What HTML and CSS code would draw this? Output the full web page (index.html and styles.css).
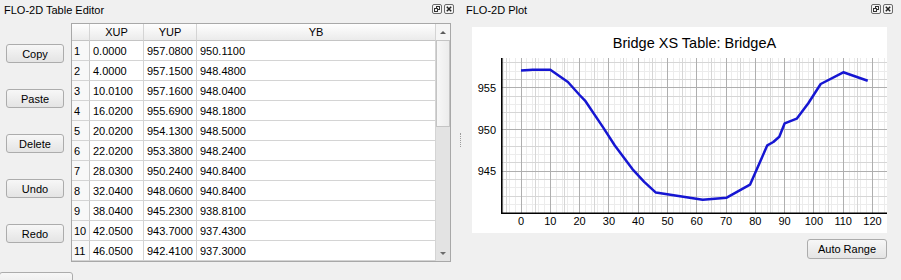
FILE: index.html
```html
<!DOCTYPE html>
<html lang="en">
<head>
    <meta charset="UTF-8">
    <title>FLO-2D Table Editor</title>
    <link rel="stylesheet" href="styles.css">
</head>
<body>
<div class="window">
    <!-- Table editor dock -->
    <section class="dock dock-table">
        <div class="dock-title">
            <span>FLO-2D Table Editor</span>
            <span class="title-btns">
                <svg width="10" height="10" viewBox="0 0 10 10"><rect x=".5" y=".5" width="9" height="9" rx="1.5" fill="#f4f4f4" stroke="#6a6a6a"/><rect x="4.5" y="2.5" width="3" height="3" fill="none" stroke="#333"/><rect x="2.5" y="4.5" width="3" height="3" fill="#f4f4f4" stroke="#333"/></svg>
                <svg width="10" height="10" viewBox="0 0 10 10"><rect x=".5" y=".5" width="9" height="9" rx="1.5" fill="#f4f4f4" stroke="#6a6a6a"/><path d="M2.8 2.8l4.4 4.4M7.2 2.8l-4.4 4.4" stroke="#222" stroke-width="1.5"/></svg>
            </span>
        </div>
        <div class="dock-body">
            <div class="btn-col">
                <button class="btn">Copy</button>
                <button class="btn">Paste</button>
                <button class="btn">Delete</button>
                <button class="btn">Undo</button>
                <button class="btn">Redo</button>
            </div>
            <div class="table-view">
                <div class="cells">
                    <div class="hd"></div><div class="hd">XUP</div><div class="hd">YUP</div><div class="hd">YB</div>
                    <div class="rh">1</div><div>0.0000</div><div>957.0800</div><div>950.1100</div>
                    <div class="rh">2</div><div>4.0000</div><div>957.1500</div><div>948.4800</div>
                    <div class="rh">3</div><div>10.0100</div><div>957.1600</div><div>948.0400</div>
                    <div class="rh">4</div><div>16.0200</div><div>955.6900</div><div>948.1800</div>
                    <div class="rh">5</div><div>20.0200</div><div>954.1300</div><div>948.5000</div>
                    <div class="rh">6</div><div>22.0200</div><div>953.3800</div><div>948.2400</div>
                    <div class="rh">7</div><div>28.0300</div><div>950.2400</div><div>940.8400</div>
                    <div class="rh">8</div><div>32.0400</div><div>948.0600</div><div>940.8400</div>
                    <div class="rh">9</div><div>38.0400</div><div>945.2300</div><div>938.8100</div>
                    <div class="rh">10</div><div>42.0500</div><div>943.7000</div><div>937.4300</div>
                    <div class="rh">11</div><div>46.0500</div><div>942.4100</div><div>937.3000</div>
                </div>
                <div class="vscroll">
                    <div class="sb-btn sb-up"><span class="tri-up"></span></div>
                    <div class="sb-thumb"></div>
                    <div class="sb-track"></div>
                    <div class="sb-btn sb-down"><span class="tri-down"></span></div>
                </div>
            </div>
        </div>
        <button class="btn btn-cut"></button>
    </section>

    <div class="splitter"><div class="grip"></div></div>

    <!-- Plot dock -->
    <section class="dock dock-plot">
        <div class="dock-title">
            <span>FLO-2D Plot</span>
            <span class="title-btns">
                <svg width="10" height="10" viewBox="0 0 10 10"><rect x=".5" y=".5" width="9" height="9" rx="1.5" fill="#f4f4f4" stroke="#6a6a6a"/><rect x="4.5" y="2.5" width="3" height="3" fill="none" stroke="#333"/><rect x="2.5" y="4.5" width="3" height="3" fill="#f4f4f4" stroke="#333"/></svg>
                <svg width="10" height="10" viewBox="0 0 10 10"><rect x=".5" y=".5" width="9" height="9" rx="1.5" fill="#f4f4f4" stroke="#6a6a6a"/><path d="M2.8 2.8l4.4 4.4M7.2 2.8l-4.4 4.4" stroke="#222" stroke-width="1.5"/></svg>
            </span>
        </div>
        <div class="plot-box">
            <svg class="plot" width="415" height="206" viewBox="0 0 415 206">
                <text class="ttl" x="222.5" y="21" text-anchor="middle">Bridge XS Table: BridgeA</text>
                <g shape-rendering="crispEdges">
                    <path class="g-faint" d="M31.4 31V186M37.3 31V186M43.1 31V186M54.9 31V186M60.7 31V186M66.6 31V186M72.4 31V186M84.2 31V186M90 31V186M95.9 31V186M101.7 31V186M113.4 31V186M119.3 31V186M125.2 31V186M131 31V186M142.7 31V186M148.6 31V186M154.4 31V186M160.3 31V186M172 31V186M177.9 31V186M183.7 31V186M189.6 31V186M201.3 31V186M207.2 31V186M213 31V186M218.9 31V186M230.6 31V186M236.5 31V186M242.3 31V186M248.2 31V186M259.9 31V186M265.8 31V186M271.6 31V186M277.5 31V186M289.2 31V186M295 31V186M300.9 31V186M306.8 31V186M318.5 31V186M324.3 31V186M330.2 31V186M336 31V186M347.8 31V186M353.6 31V186M359.5 31V186M365.3 31V186M377.1 31V186M382.9 31V186M388.8 31V186M394.6 31V186M406.3 31V186M412.2 31V186M30 177.3H415M30 160.7H415M30 127.3H415M30 110.7H415M30 94H415M30 77.4H415M30 44H415"/>
                    <path class="g-minor" d="M34.4 31V186M63.7 31V186M92.9 31V186M122.2 31V186M151.5 31V186M180.8 31V186M210.1 31V186M239.4 31V186M268.7 31V186M298 31V186M327.3 31V186M356.6 31V186M385.8 31V186M30 169H415M30 152.3H415M30 135.7H415M30 119H415M30 85.7H415M30 69H415M30 52.4H415M30 35.7H415"/>
                    <path class="g-major" d="M49 31V186M78.3 31V186M107.6 31V186M136.9 31V186M166.2 31V186M195.5 31V186M224.7 31V186M254 31V186M283.3 31V186M312.6 31V186M341.9 31V186M371.2 31V186M400.5 31V186M30 144H415M30 102.4H415M30 60.7H415"/>
                </g>
                <path class="axis" d="M29.8 31V186.2H415"/>
                <polyline class="curve" points="49,43.4 60.7,42.8 78.3,42.7 95.9,55 107.6,68 113.5,74.2 131.1,100.4 142.8,118.5 160.4,142.1 172.2,154.8 183.9,165.6 230.7,172.7 254.7,170.7 278,157.7 295.3,118.3 301.3,115 307.3,109.7 312.7,96.3 324.7,91.7 336.3,76.3 348.7,57 371.3,45.3 395.7,53.7"/>
                <g text-anchor="end">
                    <text x="24" y="65">955</text>
                    <text x="24" y="106.6">950</text>
                    <text x="24" y="148.2">945</text>
                </g>
                <g text-anchor="middle">
                    <text x="49" y="198">0</text>
                    <text x="78.3" y="198">10</text>
                    <text x="107.6" y="198">20</text>
                    <text x="136.9" y="198">30</text>
                    <text x="166.2" y="198">40</text>
                    <text x="195.5" y="198">50</text>
                    <text x="224.7" y="198">60</text>
                    <text x="254" y="198">70</text>
                    <text x="283.3" y="198">80</text>
                    <text x="312.6" y="198">90</text>
                    <text x="341.9" y="198">100</text>
                    <text x="371.2" y="198">110</text>
                    <text x="400.5" y="198">120</text>
                </g>
            </svg>
        </div>
        <div class="plot-foot">
            <button class="btn btn-wide">Auto Range</button>
        </div>
    </section>
</div>
</body>
</html>
```

FILE: styles.css
```css
html, body {
    margin: 0;
    height: 100%;
    overflow: hidden;
}

body {
    background: #f0f0f0;
    font-family: "Liberation Sans", Arial, sans-serif;
    font-size: 11px;
    color: #000;
}

.window {
    display: flex;
    height: 280px;
}

/* Docks */
.dock-table {
    width: 458px;
}

.dock-plot {
    flex: 1;
    display: flex;
    flex-direction: column;
}

.dock-title {
    height: 20px;
    display: flex;
    align-items: center;
    justify-content: space-between;
    padding: 0 4px;
}

.dock-plot .dock-title {
    padding-right: 8px;
}

.title-btns {
    display: flex;
    gap: 2px;
    margin-top: -2px;
}

.title-btns svg {
    display: block;
}

.splitter {
    width: 4px;
    display: flex;
    align-items: center;
    justify-content: center;
}

.grip {
    height: 14px;
    border-left: 1px dotted #9c9c9c;
}

/* Buttons */
.btn {
    box-sizing: border-box;
    width: 58px;
    height: 19px;
    padding: 0;
    border: 1px solid #acacac;
    border-radius: 3px;
    background: linear-gradient(#f7f7f7, #e4e4e4);
    font: inherit;
    color: #000;
}

.btn-wide {
    width: 80px;
    height: 20px;
}

.btn-cut {
    display: block;
    width: 74px;
    height: 22px;
    margin: 10px 0 0 -1px;
}

/* Table editor */
.dock-body {
    display: flex;
    align-items: flex-start;
    margin-top: 3px;
}

.btn-col {
    display: flex;
    flex-direction: column;
    gap: 26px;
    padding: 21px 0 0 6px;
    margin-right: 7px;
}

.table-view {
    display: flex;
    border: 1px solid #a8a8a8;
    background: #fff;
}

.cells {
    display: grid;
    grid-template-columns: 18px 54px 53px 239px;
    grid-template-rows: 17px repeat(11, 20px);
}

.cells div {
    box-sizing: border-box;
    border-right: 1px solid #d4d4d4;
    border-bottom: 1px solid #d4d4d4;
    padding-left: 3px;
    line-height: 20px;
    white-space: nowrap;
    overflow: hidden;
}

.cells .hd {
    padding: 0;
    text-align: center;
    line-height: 16px;
    background: linear-gradient(#fefefe, #ebebeb);
    border-bottom-color: #c4c4c4;
}

.cells .rh {
    padding-left: 2px;
    background: #f8f8f8;
    border-right-color: #c8c8c8;
}

.vscroll {
    width: 14px;
    display: flex;
    flex-direction: column;
    background: #e3e3e3;
}

.sb-btn {
    height: 16px;
    display: flex;
    align-items: center;
    justify-content: center;
}

.sb-up {
    background: #f5f5f5;
}

.sb-thumb {
    box-sizing: border-box;
    height: 87px;
    border: 1px solid #c4c4c4;
    background: linear-gradient(90deg, #f7f7f7, #ececec);
}

.sb-track {
    flex: 1;
}

.tri-up {
    border-left: 3.5px solid transparent;
    border-right: 3.5px solid transparent;
    border-bottom: 3px solid #5c5c5c;
}

.tri-down {
    border-left: 3.5px solid transparent;
    border-right: 3.5px solid transparent;
    border-top: 3px solid #6a6a6a;
}

/* Plot */
.plot-box {
    margin: 7px 14px 0 10px;
    height: 206px;
    background: #fff;
}

.plot-box svg {
    display: block;
}

.plot text {
    font-family: "Liberation Sans", Arial, sans-serif;
    font-size: 11px;
    fill: #000;
}

.plot .ttl {
    font-size: 14.5px;
}

.plot path {
    fill: none;
}

.g-faint {
    stroke: #ececec;
}

.g-minor {
    stroke: #d6d6d6;
}

.g-major {
    stroke: #afafaf;
}

.axis {
    stroke: #000;
    stroke-width: 1.6;
}

.curve {
    fill: none;
    stroke: #1616d2;
    stroke-width: 2.5;
    stroke-linejoin: round;
}

.plot-foot {
    display: flex;
    justify-content: flex-end;
    margin: 6px 14px 0 0;
}
```
